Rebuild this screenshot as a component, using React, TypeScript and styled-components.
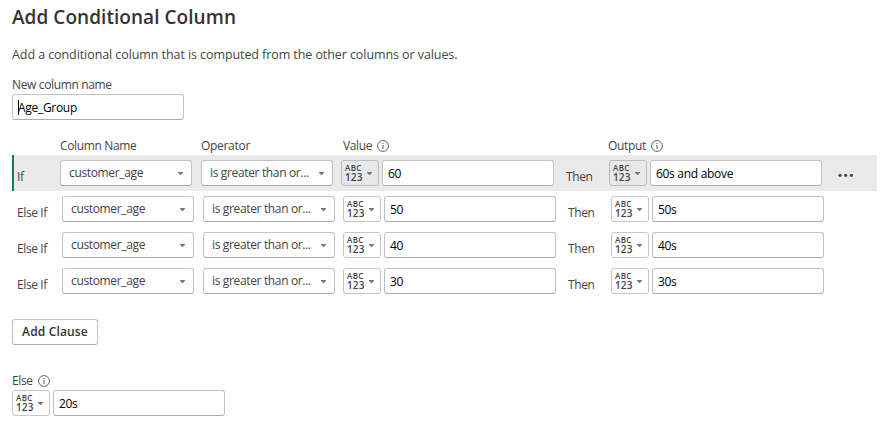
import React from 'react';
import styled, { createGlobalStyle } from 'styled-components';

const GlobalStyle = createGlobalStyle`
  * { box-sizing: border-box; }
  body {
    margin: 0;
    background: #fff;
    font-family: 'Open Sans', 'Noto Sans', sans-serif;
    font-size: 12px;
    line-height: 16px;
    color: #444;
  }
`;

const Dialog = styled.main`
  width: 883px;
  height: 430px;
  padding: 4px 6px 0 12px;
  overflow: hidden;
  background: #fff;
  white-space: nowrap;
`;

const Title = styled.h1`
  margin: 0;
  font-size: 19px;
  line-height: 26px;
  font-weight: 600;
  letter-spacing: 0.05px;
  color: #333;
`;

const Label = styled.span<{ $track?: number }>`
  letter-spacing: ${(p) => p.$track ?? -0.35}px;
`;

const Description = styled.p`
  margin: 17px 0 13px;
  font-size: 12.5px;
  letter-spacing: -0.08px;
`;

const FieldLabel = styled.div`
  display: flex;
  align-items: center;
  height: 17px;
  margin-bottom: 1px;
`;

const TextField = styled.div`
  display: flex;
  align-items: center;
  width: 172px;
  height: 26px;
  padding: 1px 5px 0;
  border: 1px solid #c2c2c2;
  border-bottom-color: #ababab;
  border-radius: 3px;
  background: #fff;
  color: #000;
  letter-spacing: -0.3px;
`;

const Caret = styled.span`
  width: 1px;
  height: 15px;
  margin-right: -1px;
  background: #000;
`;

const HeaderRow = styled.div`
  display: grid;
  grid-template-columns: 141px 142px 265px 1fr;
  padding-left: 48px;
  margin: 17px 0 1px;
  height: 17px;
`;

const HeaderCell = styled.div`
  display: flex;
  align-items: center;
`;

const ClauseRow = styled.div<{ $active: boolean }>`
  display: flex;
  align-items: flex-start;
  height: 36px;
  padding: 5px 0 0 ${(p) => (p.$active ? 3 : 5)}px;
  border-left: ${(p) => (p.$active ? '2px solid #0e7c66' : '0')};
  background: ${(p) => (p.$active ? '#eaeaea' : '#fff')};
`;

const Keyword = styled.span<{ $width: number; $before?: number }>`
  width: ${(p) => p.$width}px;
  margin-left: ${(p) => p.$before ?? 0}px;
  padding-top: 9px;
  letter-spacing: -0.4px;
`;

const SelectBox = styled.div<{ $gap: number }>`
  display: flex;
  align-items: center;
  justify-content: space-between;
  width: 132px;
  height: 26px;
  padding: 0 8px;
  margin-right: ${(p) => p.$gap}px;
  border: 1px solid #c2c2c2;
  border-bottom-color: #ababab;
  border-radius: 3px;
  background: #fff;
`;

const TypeButton = styled.div<{ $active?: boolean }>`
  display: flex;
  align-items: center;
  justify-content: space-between;
  width: 38px;
  height: 26px;
  padding: 0 6px 0 3px;
  margin-right: 3px;
  border: 1px solid ${(p) => (p.$active ? '#bcbcbc' : '#c6c6c6')};
  border-radius: 3px;
  background: ${(p) => (p.$active ? '#e8e8e8' : '#fff')};
`;

const TypeGlyph = styled.span`
  display: flex;
  flex-direction: column;
  font-weight: 600;
  color: #444;
`;

const Letters = styled.span`
  font-size: 8px;
  line-height: 8px;
  letter-spacing: 0.4px;
`;

const Digits = styled.span`
  font-size: 10px;
  line-height: 10px;
  letter-spacing: 0.1px;
`;

const Arrow = () => (
  <svg width="5" height="3" viewBox="0 0 5 3" aria-hidden="true">
    <path d="M0 0H5V.8L2.8 3H2.2L0 .8Z" fill="#777" />
  </svg>
);

const InfoSvg = styled.svg`
  margin: 1px 0 0 5px;
`;

const Info = () => (
  <InfoSvg width="12" height="12" viewBox="0 0 12 12" aria-hidden="true">
    <circle cx="6" cy="6" r="5.4" fill="none" stroke="#555" strokeWidth="0.9" />
    <path d="M6 5V9M6 3V4" stroke="#555" strokeWidth="1" />
  </InfoSvg>
);

const MoreSvg = styled.svg`
  margin: 13px 0 0 16px;
`;

const More = () => (
  <MoreSvg width="16" height="4" viewBox="0 0 16 4" aria-hidden="true">
    <circle cx="2" cy="2.3" r="1.6" fill="#444" />
    <circle cx="7.6" cy="2.3" r="1.6" fill="#444" />
    <circle cx="13.4" cy="2.3" r="1.6" fill="#444" />
  </MoreSvg>
);

const AddButton = styled.button`
  display: flex;
  align-items: center;
  justify-content: center;
  width: 86px;
  height: 26px;
  margin: 20px 0 27px;
  padding: 0;
  border: 1px solid #c2c2c2;
  border-bottom-color: #ababab;
  border-radius: 3px;
  background: #fff;
  font: 600 12px/16px 'Open Sans', 'Noto Sans', sans-serif;
  letter-spacing: 0.15px;
  color: #333;
`;

const ElseRow = styled.div`
  display: flex;
`;

const TypePicker = ({ active }: { active?: boolean }) => (
  <TypeButton $active={active}>
    <TypeGlyph>
      <Letters>ABC</Letters>
      <Digits>123</Digits>
    </TypeGlyph>
    <Arrow />
  </TypeButton>
);

const clauses = [
  { keyword: 'If', value: '60', output: '60s and above', active: true },
  { keyword: 'Else If', value: '50', output: '50s', active: false },
  { keyword: 'Else If', value: '40', output: '40s', active: false },
  { keyword: 'Else If', value: '30', output: '30s', active: false },
];

export default function App() {
  return (
    <>
      <GlobalStyle />
      <Dialog>
        <Title>Add Conditional Column</Title>
        <Description>Add a conditional column that is computed from the other columns or values.</Description>
        <FieldLabel>
          <Label>New column name</Label>
        </FieldLabel>
        <TextField>
          <Caret />
          Age_Group
        </TextField>
        <HeaderRow>
          <HeaderCell><Label>Column Name</Label></HeaderCell>
          <HeaderCell><Label $track={-0.3}>Operator</Label></HeaderCell>
          <HeaderCell><Label>Value</Label><Info /></HeaderCell>
          <HeaderCell><Label>Output</Label><Info /></HeaderCell>
        </HeaderRow>
        {clauses.map((c) => (
          <ClauseRow key={c.value} $active={c.active}>
            <Keyword $width={c.active ? 43 : 45}>{c.keyword}</Keyword>
            <SelectBox $gap={9}><Label>customer_age</Label><Arrow /></SelectBox>
            <SelectBox $gap={8}><Label>is greater than or...</Label><Arrow /></SelectBox>
            <TypePicker active={c.active} />
            <TextField>{c.value}</TextField>
            <Keyword $width={43} $before={12}>Then</Keyword>
            <TypePicker active={c.active} />
            <TextField>{c.output}</TextField>
            {c.active && <More />}
          </ClauseRow>
        ))}
        <AddButton>Add Clause</AddButton>
        <FieldLabel><Label>Else</Label><Info /></FieldLabel>
        <ElseRow>
          <TypePicker />
          <TextField>20s</TextField>
        </ElseRow>
      </Dialog>
    </>
  );
}
